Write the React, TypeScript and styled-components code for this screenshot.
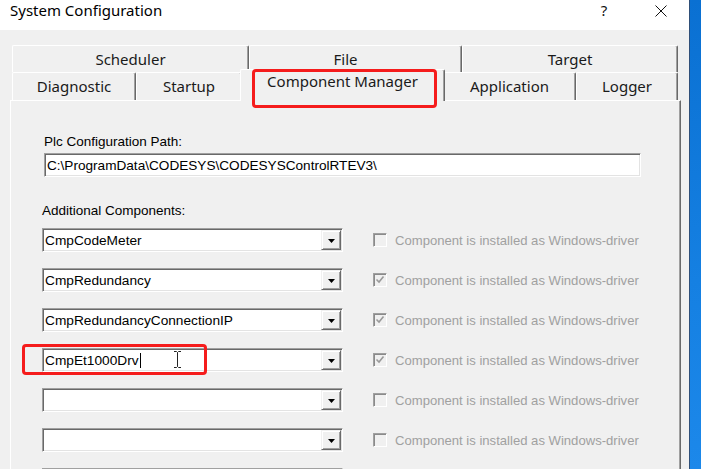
import React from 'react';
import styled, { createGlobalStyle } from 'styled-components';

const GlobalStyle = createGlobalStyle`
  html, body { margin: 0; padding: 0; background: #f0f0f0; }
  body { width: 701px; height: 469px; overflow: hidden; }
  * { box-sizing: border-box; }
`;

const Window = styled.div`
  position: relative;
  display: flex;
  width: 701px;
  height: 469px;
  overflow: hidden;
`;

const Dialog = styled.div`
  width: 690px;
  display: flex;
  flex-direction: column;
  background: #f0f0f0;
  border-right: 1px solid #2f4f78;
`;

const Desktop = styled.div`
  flex: 1;
  background: linear-gradient(180deg, #0a70d2 0%, #1580e2 60%, #1c88ea 100%);
`;

const TitleBar = styled.div`
  height: 30px;
  flex: none;
  display: flex;
  align-items: flex-start;
  background: #ffffff;
  padding-left: 10px;
`;

const Title = styled.div`
  font: 15px/20px "Noto Sans", "Liberation Sans", sans-serif;
  color: #000;
`;

const TitleButtons = styled.div`
  margin-left: auto;
  margin-right: 5px;
  display: flex;
  gap: 11px;
`;

const TitleButton = styled.div`
  width: 46px;
  height: 30px;
  display: flex;
  justify-content: center;
  align-items: flex-start;
  font: 15px/20px "Noto Sans", "Liberation Sans", sans-serif;
  color: #111;
  svg { margin-top: 5px; }
`;

const Body = styled.div`
  flex: 1;
  display: flex;
  flex-direction: column;
  padding: 15px 0 0 10px;
  min-height: 0;
`;

const TabStrip = styled.div`
  display: flex;
  flex-direction: column;
  padding-left: 2px;
  position: relative;
  z-index: 1;
`;

const TabRow = styled.div<{ $h: number }>`
  display: flex;
  align-items: flex-start;
  height: ${p => p.$h}px;
`;

const Tab = styled.div<{ $w: number; $selected?: boolean; $shift?: number }>`
  position: relative;
  flex: none;
  width: ${p => p.$w}px;
  height: ${p => (p.$selected ? '32px' : '100%')};
  margin: ${p => (p.$selected ? '-3px -2px 0' : '0')};
  padding-top: ${p => (p.$selected ? 1 : 3)}px;
  padding-right: ${p => p.$shift ?? 0}px;
  display: flex;
  justify-content: center;
  align-items: flex-start;
  background: #f0f0f0;
  border-top: 1px solid #ffffff;
  border-left: 1px solid #ffffff;
  border-right: 1px solid #696969;
  box-shadow: inset -1px 0 #a0a0a0;
  border-radius: 2px 2px 0 0;
  z-index: ${p => (p.$selected ? 3 : 1)};
  font: 15px/20px "Noto Sans", "Liberation Sans", sans-serif;
  color: #1a1a1a;
  white-space: nowrap;
`;

const Panel = styled.div`
  flex: 1;
  width: 671px;
  display: flex;
  flex-direction: column;
  background: #f0f0f0;
  border-top: 1px solid #ffffff;
  border-left: 1px solid #ffffff;
  border-right: 1px solid #696969;
  box-shadow: inset -1px 0 #a0a0a0;
  padding: 33px 0 0 31px;
  font-family: "Liberation Sans", Arial, sans-serif;
`;

const PathGroup = styled.div`
  display: flex;
  flex-direction: column;
  margin-left: 2px;
`;

const FieldLabel = styled.div<{ $gap?: number }>`
  font-size: 13.5px;
  line-height: 16px;
  color: #000;
  margin-top: ${p => p.$gap ?? 0}px;
`;

const TextBox = styled.div`
  width: 597px;
  height: 24px;
  margin-top: 3px;
  display: flex;
  align-items: center;
  padding: 0 2px;
  background: #fff;
  border: 1px solid;
  border-color: #a0a0a0 #ffffff #ffffff #a0a0a0;
  box-shadow: inset 1px 1px #696969, inset -1px -1px #e3e3e3;
  font-size: 13.6px;
  color: #000;
  white-space: nowrap;
`;

const ComponentList = styled.div`
  display: flex;
  flex-direction: column;
  gap: 16px;
  margin-top: 9px;
`;

const ComponentRow = styled.div`
  display: flex;
  align-items: center;
  flex: none;
`;

const Combo = styled.div`
  width: 301px;
  height: 24px;
  flex: none;
  display: flex;
  align-items: stretch;
  padding: 1px;
  background: #fff;
  border: 1px solid;
  border-color: #a0a0a0 #ffffff #ffffff #a0a0a0;
  box-shadow: inset 1px 1px #696969, inset -1px -1px #e3e3e3;
`;

const ComboText = styled.div`
  flex: 1;
  display: flex;
  align-items: center;
  padding-left: 1px;
  font-size: 13.7px;
  color: #000;
  white-space: nowrap;
`;

const Caret = styled.span`
  display: inline-block;
  width: 1px;
  height: 15px;
  margin-left: 1px;
  background: #000;
`;

const DropButton = styled.div`
  width: 20px;
  flex: none;
  display: flex;
  justify-content: center;
  align-items: center;
  padding-top: 2px;
  background: #f0f0f0;
  border: 1px solid;
  border-color: #f0f0f0 #696969 #696969 #f0f0f0;
  box-shadow: inset 1px 1px #ffffff, inset -1px -1px #a0a0a0;
`;

const CheckBox = styled.div`
  width: 14px;
  height: 14px;
  flex: none;
  margin-left: 30px;
  display: flex;
  justify-content: center;
  align-items: center;
  background: #f0f0f0;
  border: 1px solid;
  border-color: #a0a0a0 #ffffff #ffffff #a0a0a0;
  box-shadow: inset 1px 1px #8a8a8a;
`;

const CheckLabel = styled.span`
  margin-left: 8px;
  font-size: 13.1px;
  color: #a0a0a0;
  white-space: nowrap;
`;

const Highlight = styled.div<{ $x: number; $y: number; $w: number; $h: number }>`
  position: absolute;
  left: ${p => p.$x}px;
  top: ${p => p.$y}px;
  width: ${p => p.$w}px;
  height: ${p => p.$h}px;
  border: 3px solid #f51c1c;
  border-radius: 4px;
  z-index: 10;
  pointer-events: none;
`;

const Cursor = styled.div`
  position: absolute;
  left: 173px;
  top: 351px;
  width: 9px;
  height: 17px;
  z-index: 11;
  svg { display: block; }
`;

const rowOneTabs = [
  { label: 'Scheduler', w: 237 },
  { label: 'File', w: 213, shift: 20 },
  { label: 'Target', w: 216 },
];

const rowTwoTabs = [
  { label: 'Diagnostic', w: 124 },
  { label: 'Startup', w: 106 },
  { label: 'Component Manager', w: 205, selected: true },
  { label: 'Application', w: 133 },
  { label: 'Logger', w: 102 },
];

const components = [
  { name: 'CmpCodeMeter', checked: false, option: true },
  { name: 'CmpRedundancy', checked: true, option: true },
  { name: 'CmpRedundancyConnectionIP', checked: true, option: true },
  { name: 'CmpEt1000Drv', checked: true, caret: true, option: true },
  { name: '', checked: false, option: true },
  { name: '', checked: false, option: true },
  { name: '', checked: false, option: false },
];

const Arrow = () => (
  <svg width="7" height="4" viewBox="0 0 7 4">
    <polygon points="0,0 7,0 3.5,4" fill="#000" />
  </svg>
);

const Check = () => (
  <svg width="10" height="10" viewBox="0 0 10 10">
    <polyline points="1.5,4.5 4,7 8.5,1.5" fill="none" stroke="#9a9a9a" strokeWidth="1.6" />
  </svg>
);

export default function App() {
  return (
    <>
      <GlobalStyle />
      <Window>
        <Dialog>
          <TitleBar>
            <Title>System Configuration</Title>
            <TitleButtons>
              <TitleButton>?</TitleButton>
              <TitleButton>
                <svg width="12" height="12" viewBox="0 0 12 12">
                  <path d="M0.5 0.5 L11.5 11.5 M11.5 0.5 L0.5 11.5" stroke="#111" strokeWidth="1" />
                </svg>
              </TitleButton>
            </TitleButtons>
          </TitleBar>
          <Body>
            <TabStrip>
              <TabRow $h={27}>
                {rowOneTabs.map(t => (
                  <Tab key={t.label} $w={t.w} $shift={t.shift}>{t.label}</Tab>
                ))}
              </TabRow>
              <TabRow $h={28}>
                {rowTwoTabs.map(t => (
                  <Tab key={t.label} $w={t.w} $selected={t.selected}>{t.label}</Tab>
                ))}
              </TabRow>
            </TabStrip>
            <Panel>
              <PathGroup>
                <FieldLabel>Plc Configuration Path:</FieldLabel>
                <TextBox>C:\ProgramData\CODESYS\CODESYSControlRTEV3\</TextBox>
              </PathGroup>
              <FieldLabel $gap={26}>Additional Components:</FieldLabel>
              <ComponentList>
                {components.map((c, i) => (
                  <ComponentRow key={i}>
                    <Combo>
                      <ComboText>
                        {c.name}
                        {c.caret && <Caret />}
                      </ComboText>
                      <DropButton><Arrow /></DropButton>
                    </Combo>
                    {c.option && (
                      <>
                        <CheckBox>{c.checked && <Check />}</CheckBox>
                        <CheckLabel>Component is installed as Windows-driver</CheckLabel>
                      </>
                    )}
                  </ComponentRow>
                ))}
              </ComponentList>
            </Panel>
          </Body>
        </Dialog>
        <Desktop />
        <Highlight $x={252} $y={69} $w={185} $h={39} />
        <Highlight $x={22} $y={344} $w={185} $h={31} />
        <Cursor>
          <svg width="9" height="17" viewBox="0 0 9 17">
            <path d="M1 0.5 H3.5 L4.5 1.5 L5.5 0.5 H8 M4.5 1.5 V15.5 M1 16.5 H3.5 L4.5 15.5 L5.5 16.5 H8" fill="none" stroke="#222" strokeWidth="1" />
          </svg>
        </Cursor>
      </Window>
    </>
  );
}
